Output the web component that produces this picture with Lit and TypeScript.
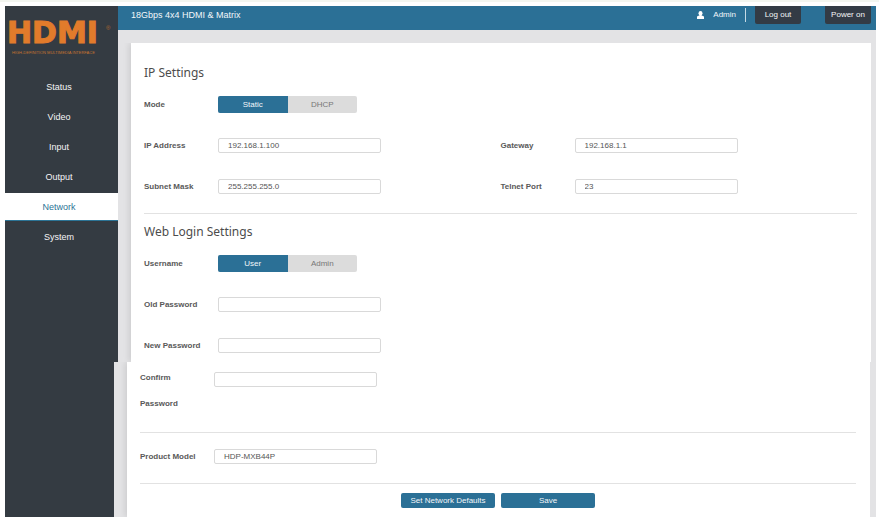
import { LitElement, html, css, svg } from "lit";
import { customElement, state } from "lit/decorators.js";

const NAV = ["Status", "Video", "Input", "Output", "Network", "System"];

@customElement("app-root")
export class AppRoot extends LitElement {
  @state() private page = "Network";
  @state() private mode = "Static";
  @state() private account = "User";

  static styles = css`
    :host {
      display: block;
      font-family: "Liberation Sans", Arial, sans-serif;
      font-size: 8px;
      color: #5a5a5a;
      background: #fff;
    }
    * {
      box-sizing: border-box;
    }
    .frame {
      display: flex;
      flex-direction: column;
      min-height: 100vh;
      padding: 4px 3px 4px 5px;
      border-top: 2px solid #f3f6f0;
    }
    .band {
      display: grid;
      grid-template-columns: 113px minmax(0, 1fr);
    }
    .band.lower {
      grid-template-columns: 109px minmax(0, 1fr);
      flex: 1;
    }
    .side {
      background: #343b42;
    }
    .logo {
      display: block;
      width: 113px;
      height: 67px;
    }
    .mark {
      font: bold 30px "DejaVu Sans", sans-serif;
      fill: #e27b2b;
      stroke: #e27b2b;
      stroke-width: 1px;
    }
    .reg {
      font: 6px "Liberation Sans", sans-serif;
      fill: #b5692f;
    }
    .tag {
      font: 4px "Liberation Sans", sans-serif;
      fill: #c87430;
    }
    nav {
      display: flex;
      flex-direction: column;
      gap: 2px;
    }
    nav a {
      height: 28px;
      line-height: 29px;
      text-align: center;
      padding-right: 5px;
      font-size: 9px;
      color: #f4f5f6;
      text-decoration: none;
    }
    nav a.current {
      background: #fff;
      color: #2c7496;
      border-bottom: 1px solid #2c7496;
    }
    .main {
      display: flex;
      flex-direction: column;
      background: #e3e3e5;
      min-width: 0;
    }
    header {
      display: flex;
      align-items: flex-start;
      height: 24px;
      padding: 0 5px 0 13px;
      background: #2b7096;
      color: #f2f7fa;
      line-height: 18px;
    }
    .title {
      flex: 1;
      margin: 0;
      font-size: 9px;
      font-weight: normal;
    }
    .who {
      display: flex;
      align-items: center;
      gap: 9px;
      height: 18px;
      padding-right: 9px;
    }
    .sep {
      width: 1px;
      height: 14px;
      margin: 2px 9px 0 0;
      background: #c5dae5;
    }
    button {
      font: inherit;
      border: 0;
      padding: 0;
      color: #f4f6f8;
      cursor: pointer;
    }
    .dark {
      width: 46px;
      height: 18px;
      background: #333b45;
      border-radius: 0 0 2px 2px;
    }
    .dark + .dark {
      margin-left: 24px;
    }
    .card {
      flex: 1;
      background: #fff;
      padding: 0 14px 0 13px;
      box-shadow: -2px 0 6px rgba(0, 0, 0, 0.1);
      clip-path: inset(0 0 0 -10px);
    }
    .upper .card {
      margin: 13px 5px 0 13px;
      padding-top: 21px;
      padding-bottom: 8px;
    }
    .lower .card {
      margin: 0 6px 0 13px;
      padding-top: 10px;
    }
    h2 {
      margin: 0 0 14px;
      font: 12px/18px "Noto Sans", sans-serif;
      color: #4c4c4c;
    }
    .rows {
      display: grid;
      grid-template-columns: 1fr 1fr;
      row-gap: 24px;
    }
    .field {
      display: grid;
      grid-template-columns: 74px minmax(0, 163px);
      align-items: center;
      height: 17px;
    }
    .wide {
      grid-column: 1 / -1;
    }
    .name {
      font-weight: bold;
      color: #595959;
    }
    .text {
      width: 100%;
      height: 15px;
      padding: 0 9px;
      border: 1px solid #d9d9d9;
      border-radius: 2px;
      background: #fff;
      font: inherit;
      color: #555;
      outline: 0;
    }
    .text:focus {
      border-color: #2b7096;
    }
    .toggle {
      display: flex;
      width: 139px;
      height: 17px;
      border-radius: 2px;
      overflow: hidden;
      background: #dcdcdc;
    }
    .toggle label {
      position: relative;
      flex: 1;
      line-height: 17px;
      text-align: center;
      color: #777;
      cursor: pointer;
    }
    .toggle label.on {
      background: #2b7096;
      color: #f2f7fa;
    }
    .toggle input {
      position: absolute;
      inset: 0;
      margin: 0;
      appearance: none;
      cursor: pointer;
    }
    hr {
      height: 1px;
      margin: 18px 0 9px;
      border: 0;
      background: #e2e2e2;
    }
    .lower hr {
      margin: 15px 0;
    }
    .confirm {
      height: auto;
      align-items: start;
    }
    .confirm .name {
      width: 50px;
      line-height: 26px;
      margin-top: -7px;
    }
    .lower .actions-rule {
      margin: 18px 0 9px;
    }
    .actions {
      display: flex;
      justify-content: center;
      gap: 6px;
    }
    .primary {
      width: 94px;
      height: 15px;
      border-radius: 2px;
      background: #2b7096;
    }
  `;

  private field(id: string, name: string, value: string, extra = "", type = "text") {
    return html`<div class="field ${extra}">
      <label class="name" for=${id}>${name}</label>
      <input class="text" id=${id} type=${type} .value=${value} />
    </div>`;
  }

  private toggle(
    id: string,
    name: string,
    options: string[],
    current: string,
    pick: (v: string) => void
  ) {
    return html`<div class="field wide">
      <span class="name" id=${id}>${name}</span>
      <div class="toggle" role="radiogroup" aria-labelledby=${id}>
        ${options.map(
          (o) => html`<label class=${o === current ? "on" : ""}>
            <input type="radio" name=${id} .checked=${o === current} @change=${() => pick(o)} />${o}
          </label>`
        )}
      </div>
    </div>`;
  }

  private logo() {
    return svg`<svg class="logo" viewBox="0 0 113 67" role="img" aria-label="HDMI">
      <text class="mark" x="2" y="37">HDMI</text>
      <text class="reg" x="101" y="24">®</text>
      <text class="tag" x="7" y="48">HIGH-DEFINITION MULTIMEDIA INTERFACE</text>
    </svg>`;
  }

  render() {
    return html`<div class="frame">
      <div class="band upper">
        <aside class="side">
          ${this.logo()}
          <nav>
            ${NAV.map(
              (n) => html`<a
                href="#${n.toLowerCase()}"
                class=${n === this.page ? "current" : ""}
                @click=${() => (this.page = n)}
                >${n}</a
              >`
            )}
          </nav>
        </aside>
        <div class="main">
          <header>
            <h1 class="title">18Gbps 4x4 HDMI &amp; Matrix</h1>
            <span class="who">
              <svg width="7" height="8" viewBox="0 0 7 8" fill="#fff" aria-hidden="true">
                <ellipse cx="3.5" cy="2.3" rx="2" ry="2.3" />
                <path d="M2.4 3.500h2.200v1l1.700.6q.7.3.7 1V8H0V6.100q0-.7.7-1l1.700-.6z" />
              </svg>
              Admin
            </span>
            <span class="sep"></span>
            <button class="dark">Log out</button>
            <button class="dark">Power on</button>
          </header>
          <section class="card">
            <h2>IP Settings</h2>
            <div class="rows">
              ${this.toggle("mode", "Mode", ["Static", "DHCP"], this.mode, (v) => (this.mode = v))}
              ${this.field("ip", "IP Address", "192.168.1.100")}
              ${this.field("gateway", "Gateway", "192.168.1.1")}
              ${this.field("mask", "Subnet Mask", "255.255.255.0")}
              ${this.field("telnet", "Telnet Port", "23")}
            </div>
            <hr />
            <h2>Web Login Settings</h2>
            <div class="rows">
              ${this.toggle("user", "Username", ["User", "Admin"], this.account, (v) => (this.account = v))}
              ${this.field("old", "Old Password", "", "wide", "password")}
              ${this.field("new", "New Password", "", "wide", "password")}
            </div>
          </section>
        </div>
      </div>
      <div class="band lower">
        <div class="side"></div>
        <div class="main">
          <section class="card">
            ${this.field("confirm", "Confirm Password", "", "confirm", "password")}
            <hr />
            ${this.field("model", "Product Model", "HDP-MXB44P")}
            <hr class="actions-rule" />
            <div class="actions">
              <button class="primary">Set Network Defaults</button>
              <button class="primary">Save</button>
            </div>
          </section>
        </div>
      </div>
    </div>`;
  }
}
